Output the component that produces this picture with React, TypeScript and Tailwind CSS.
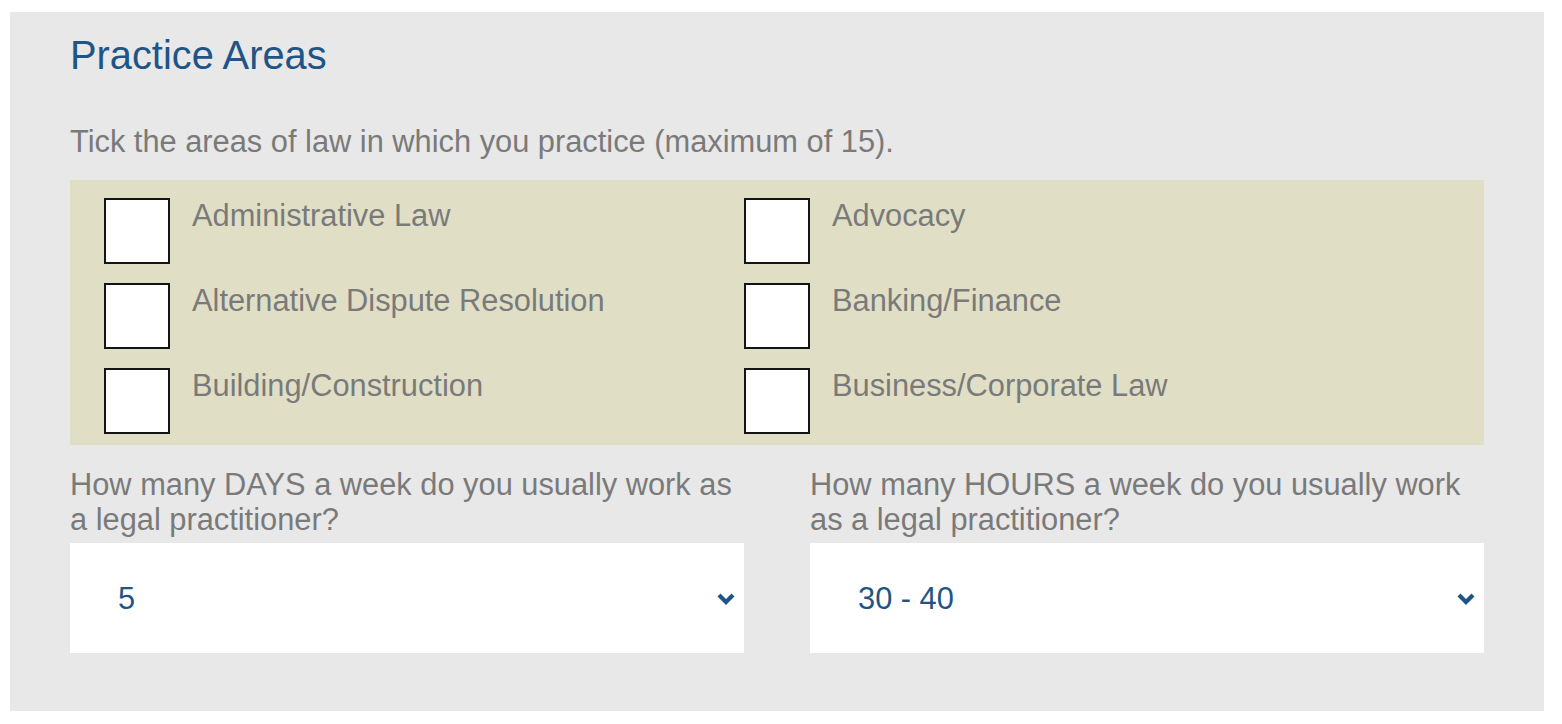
import React from 'react';

const areas = [
  'Administrative Law',
  'Advocacy',
  'Alternative Dispute Resolution',
  'Banking/Finance',
  'Building/Construction',
  'Business/Corporate Law',
];

function Chevron() {
  return (
    <svg width="18" height="13" viewBox="0 0 18 13" className="shrink-0">
      <polyline points="2,3 9,10 16,3" fill="none" stroke="#1f5586" strokeWidth="4.2" strokeLinejoin="miter" />
    </svg>
  );
}

function SelectBox({ value }: { value: string }) {
  return (
    <div className="h-[110px] bg-white flex items-center justify-between pl-[48px] pr-[9px]">
      <span className="text-[#1f5586] text-[30.8px] leading-[35px]">{value}</span>
      <Chevron />
    </div>
  );
}

export default function App() {
  return (
    <div className="min-h-screen bg-white pt-[12px] pl-[10px] font-['Liberation_Sans',Arial,sans-serif]">
      <div className="w-[1534px] bg-[#e8e8e8] pt-[21px] pb-[58px] pl-[60px]">
        <h1 className="text-[#1f5586] text-[39.8px] leading-[45px]">Practice Areas</h1>

        <p className="mt-[46px] text-[#7a7a7a] text-[30.8px] leading-[35px]">
          Tick the areas of law in which you practice (maximum of 15).
        </p>

        <div className="mt-[21px] w-[1414px] bg-[#e0dfc6] pt-[18px] pb-[11px] pl-[34px] grid grid-cols-[640px_640px] gap-y-[19px]">
          {areas.map((name) => (
            <label key={name} className="flex items-start gap-[22px] cursor-pointer">
              <input type="checkbox" className="appearance-none w-[66px] h-[66px] shrink-0 bg-white border-2 border-[#141414]" />
              <span className="text-[#7a7a7a] text-[30.8px] leading-[35px]">{name}</span>
            </label>
          ))}
        </div>

        <div className="mt-[22px] w-[1414px] grid grid-cols-[674px_674px] gap-x-[66px]">
          <div className="flex flex-col gap-[6px]">
            <p className="text-[#7a7a7a] text-[30.8px] leading-[35px]">
              How many DAYS a week do you usually work as a legal practitioner?
            </p>
            <SelectBox value="5" />
          </div>
          <div className="flex flex-col gap-[6px]">
            <p className="text-[#7a7a7a] text-[30.8px] leading-[35px]">
              How many HOURS a week do you usually work as a legal practitioner?
            </p>
            <SelectBox value="30 - 40" />
          </div>
        </div>
      </div>
    </div>
  );
}
